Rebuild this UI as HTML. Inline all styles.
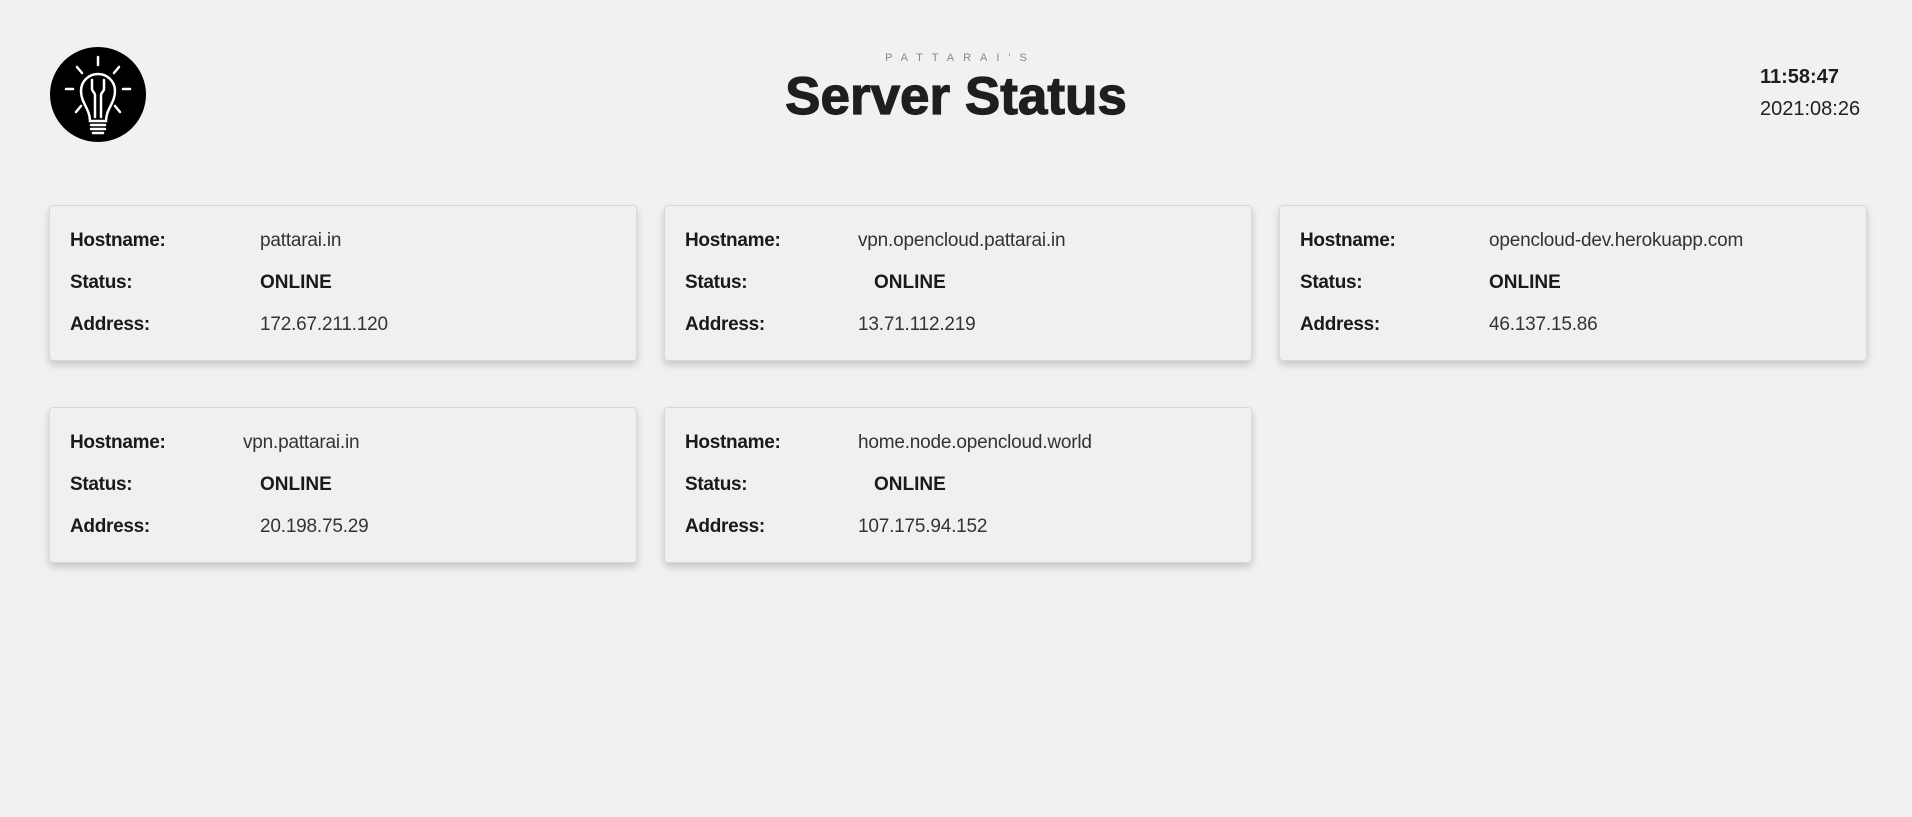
<!DOCTYPE html>
<html><head><style>
*{margin:0;padding:0;box-sizing:border-box}
body{width:1912px;height:817px;background:#f1f1f1;font-family:"Liberation Sans",sans-serif;color:#1e1e1e;position:relative;overflow:hidden}
.logo{position:absolute;left:50px;top:47px;width:96px;height:95px;border-radius:50%;background:#000}
.sub{position:absolute;left:0;width:1912px;top:52px;text-align:center;font-size:11px;letter-spacing:9px;color:#888;padding-left:9px}
.title{position:absolute;left:0;width:1912px;top:66px;text-align:center;font-size:53px;font-weight:bold;color:#1e1e1e;-webkit-text-stroke:1.2px #1e1e1e}
.time{position:absolute;right:44px;top:66px;font-size:20px;font-weight:bold;text-align:left;width:108px}
.date{position:absolute;right:44px;top:98px;font-size:20px;color:#222;width:108px}
.card{position:absolute;width:588px;height:156px;background:#f0f0f0;border:1px solid #d8d8d8;border-radius:4px;box-shadow:0 4px 8px rgba(0,0,0,.18)}
.card div{position:absolute;font-size:19px;white-space:nowrap}
.l{left:20px;font-weight:bold;color:#1a1a1a;letter-spacing:-0.3px}
.v{color:#333;letter-spacing:-0.2px}
.s{font-weight:bold;color:#1a1a1a}
.r1{top:24px}.r2{top:66px}.r3{top:108px}
</style></head><body>
<div class="logo"><svg width="96" height="95" viewBox="0 0 96 95" fill="none" stroke="#fff" stroke-width="2.5" stroke-linecap="round">
<line x1="48" y1="10" x2="48" y2="18"/><line x1="27" y1="20" x2="32" y2="26"/><line x1="69" y1="20" x2="64" y2="26"/>
<line x1="16" y1="42" x2="23" y2="42"/><line x1="73" y1="42" x2="80" y2="42"/><line x1="26" y1="65" x2="31" y2="59"/><line x1="70" y1="65" x2="65" y2="59"/>
<path d="M40 74 C40 62 31 56 31 44 C31 34 39 27 48 27 C57 27 65 34 65 44 C65 56 56 62 56 74 Z"/>
<path d="M42 33 L42 42 C42 44 45 46 45 48 L45 70 M54 33 L54 42 C54 44 51 46 51 48 L51 70"/>
<line x1="41" y1="78" x2="55" y2="78"/><line x1="41" y1="82" x2="55" y2="82"/><line x1="43" y1="86" x2="53" y2="86"/>
</svg></div>
<div class="sub">PATTARAI'S</div>
<div class="title">Server Status</div>
<div class="time">11:58:47</div>
<div class="date">2021:08:26</div>

<div class="card" style="left:49px;top:205px">
<div class="l r1">Hostname:</div><div class="v r1" style="left:210px">pattarai.in</div>
<div class="l r2">Status:</div><div class="s r2" style="left:210px">ONLINE</div>
<div class="l r3">Address:</div><div class="v r3" style="left:210px">172.67.211.120</div></div>

<div class="card" style="left:664px;top:205px">
<div class="l r1">Hostname:</div><div class="v r1" style="left:193px">vpn.opencloud.pattarai.in</div>
<div class="l r2">Status:</div><div class="s r2" style="left:209px">ONLINE</div>
<div class="l r3">Address:</div><div class="v r3" style="left:193px">13.71.112.219</div></div>

<div class="card" style="left:1279px;top:205px">
<div class="l r1">Hostname:</div><div class="v r1" style="left:209px">opencloud-dev.herokuapp.com</div>
<div class="l r2">Status:</div><div class="s r2" style="left:209px">ONLINE</div>
<div class="l r3">Address:</div><div class="v r3" style="left:209px">46.137.15.86</div></div>

<div class="card" style="left:49px;top:407px">
<div class="l r1">Hostname:</div><div class="v r1" style="left:193px">vpn.pattarai.in</div>
<div class="l r2">Status:</div><div class="s r2" style="left:210px">ONLINE</div>
<div class="l r3">Address:</div><div class="v r3" style="left:210px">20.198.75.29</div></div>

<div class="card" style="left:664px;top:407px">
<div class="l r1">Hostname:</div><div class="v r1" style="left:193px">home.node.opencloud.world</div>
<div class="l r2">Status:</div><div class="s r2" style="left:209px">ONLINE</div>
<div class="l r3">Address:</div><div class="v r3" style="left:193px">107.175.94.152</div></div>
</body></html>
